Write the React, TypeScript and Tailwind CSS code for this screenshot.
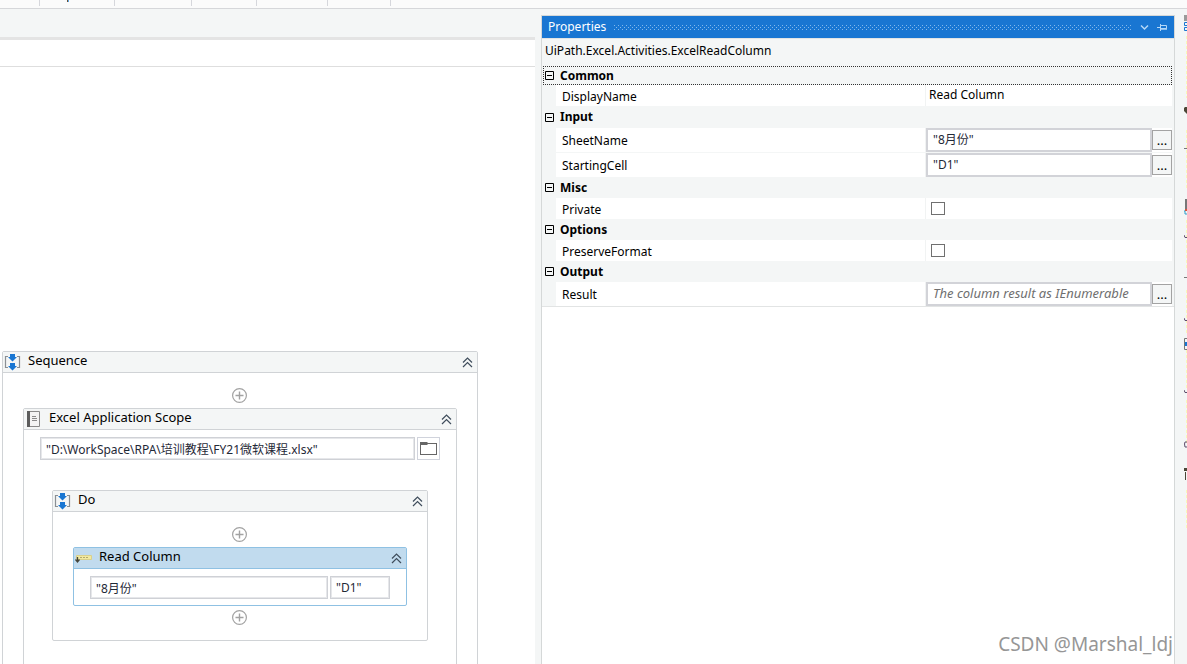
import type { ReactNode } from 'react';
import clsx from 'clsx';

function CollapseIcon() {
  return (
    <svg width="11" height="11" viewBox="0 0 11 11" fill="none" stroke="#3f4d5c" strokeWidth="1.2">
      <path d="M1 5.5 5.5 1 10 5.5M1 10 5.5 5.5 10 10" />
    </svg>
  );
}

function SequenceIcon() {
  return (
    <svg width="18" height="18" viewBox="1 0 18 18">
      <path d="M5 3.5H2.5v11H5M14 3.5h2.5v11H14" fill="none" stroke="#8a8f94" strokeWidth="1.2" />
      <path d="M7 1h5v3h2L9.5 8.5 5 4h2zM7 10h5v3h2l-4.5 4.5L5 13h2z" fill="#1976d2" />
    </svg>
  );
}

function ScopeIcon() {
  return (
    <svg width="18" height="18" viewBox="0 0 18 18">
      <path d="M3.5 1.5h11v15h-11z" fill="#f4f4f4" stroke="#8a8a8a" />
      <path d="M2 1h3v16H2z" fill="#5c5c5c" />
      <path d="M7 6.5h4M7 8.5h5M7 10.5h5" stroke="#8a8a8a" />
    </svg>
  );
}

function ColumnIcon() {
  return (
    <svg width="18" height="18" viewBox="0 0 18 18">
      <path d="M1.5 6.5h15v4h-15z" fill="#f2e9a0" stroke="#d9d08c" />
      <path d="M5 8.5h9" stroke="#b3aa70" strokeDasharray="2 1" />
      <path d="M2.5 8v5M.5 10.5l2 2.5 2-2.5" fill="none" stroke="#45453a" strokeWidth="1.3" />
    </svg>
  );
}

function AddButton({ className }: { className: string }) {
  return (
    <div className={clsx('flex justify-center pr-0.5', className)}>
      <button type="button" aria-label="Add activity">
        <svg className="block" width="15" height="15" viewBox="0 0 15 15" fill="none" stroke="#a2a2a2">
          <circle cx="7.5" cy="7.5" r="6.9" strokeWidth="1.2" />
          <path d="M7.5 3.5v8M3.5 7.5h8" strokeWidth="1.4" />
        </svg>
      </button>
    </div>
  );
}

type ActivityProps = {
  title: string;
  icon: ReactNode;
  selected?: boolean;
  children: ReactNode;
};

function Activity({ title, icon, selected, children }: ActivityProps) {
  return (
    <section className={clsx('rounded-xs border bg-white', selected ? 'border-[#8fc1e3]' : 'border-[#d0d3d6]')}>
      <header
        className={clsx(
          'flex h-[21px] items-center border-b pr-1 pl-px',
          selected ? 'border-[#8fc1e3] bg-[#c1dbee]' : 'border-[#d0d3d6] bg-[#f4f6f6]',
        )}
      >
        {icon}
        <h2 className="flex-1 pb-1 pl-1.5 text-[13px]">{title}</h2>
        <button type="button" aria-label={`Collapse ${title}`}>
          <CollapseIcon />
        </button>
      </header>
      {children}
    </section>
  );
}

function FieldBox({ label, value, className }: { label: string; value: string; className: string }) {
  return (
    <input
      aria-label={label}
      defaultValue={value}
      className={clsx(
        'h-[23px] min-w-0 border border-[#cfd1d6] bg-white px-[5px] text-[#1f2937] shadow-[inset_0_0_0_1px_#e6e7ea] outline-none',
        className,
      )}
    />
  );
}

function Designer() {
  return (
    <div className="flex w-[535px] shrink-0 flex-col">
      <div className="h-[31px] border-b-3 border-[#e4e4e4]" />
      <div className="h-[27px] border-b border-[#dedede] bg-white" />
      <div className="min-h-0 flex-1 overflow-hidden bg-white pt-[284px] pr-[57px] pl-0.5">
        <Activity title="Sequence" icon={<SequenceIcon />}>
          <AddButton className="pt-[15px] pb-[5px]" />
          <div className="px-5 pb-9">
            <Activity title="Excel Application Scope" icon={<ScopeIcon />}>
              <div className="flex gap-0.5 px-4 pt-[7px] pb-[30px]">
                <FieldBox label="Workbook path" value={'"D:\\WorkSpace\\RPA\\培训教程\\FY21微软课程.xlsx"'} className="flex-1" />
                <button
                  type="button"
                  aria-label="Browse"
                  className="flex size-[23px] items-center justify-center border border-[#d0d3dc] bg-white"
                >
                  <svg width="17" height="13" viewBox="0 0 17 13">
                    <path d="M0 0h7l1 1h9v12H0zM1 3v9h15V2H8L7 3z" fill="#666" fillRule="evenodd" />
                  </svg>
                </button>
              </div>
              <div className="px-7 pb-9">
                <Activity title="Do" icon={<SequenceIcon />}>
                  <AddButton className="pt-[15px] pb-[5px]" />
                  <div className="px-5">
                    <Activity title="Read Column" icon={<ColumnIcon />} selected>
                      <div className="flex gap-0.5 px-4 pt-[7px] pb-1.5">
                        <FieldBox label="Sheet name" value={'"8月份"'} className="flex-1" />
                        <FieldBox label="Starting cell" value={'"D1"'} className="w-[60px]" />
                      </div>
                    </Activity>
                  </div>
                  <AddButton className="pt-1 pb-[15px]" />
                </Activity>
              </div>
            </Activity>
          </div>
        </Activity>
      </div>
    </div>
  );
}

function Category({ title, focused }: { title: string; focused?: boolean }) {
  return (
    <button
      type="button"
      className={clsx(
        'flex w-full items-center gap-1.5 text-left font-bold',
        focused ? 'h-[19px] border border-dotted border-[#333] pl-px' : 'pl-0.5',
        !focused && (title === 'Input' ? 'h-[22px]' : 'h-[21px]'),
      )}
    >
      <svg width="9" height="9" viewBox="0 0 9 9" fill="none" stroke="#000">
        <path d="M.5.5h8v8h-8zM2 4.5h5" />
      </svg>
      {title}
    </button>
  );
}

function Property({ id, label, tall, children }: { id: string; label: string; tall?: boolean; children: ReactNode }) {
  return (
    <div className={clsx('grid grid-cols-[13px_minmax(0,1fr)_247px]', tall ? 'h-6' : 'h-[21px]')}>
      <span />
      <label htmlFor={id} className={clsx('flex items-center bg-white pl-1.5', tall ? 'pt-px' : 'pt-0.5')}>
        {label}
      </label>
      <div className="flex min-h-0 items-center border-l border-[#f1f3f3] bg-white">{children}</div>
    </div>
  );
}

function ExpressionField({ id, value, placeholder }: { id: string; value?: string; placeholder?: string }) {
  return (
    <>
      <input
        id={id}
        defaultValue={value}
        placeholder={placeholder}
        className="h-6 min-w-0 flex-1 border-2 border-[#d2d3d8] bg-white pr-1 pb-0.5 pl-[5px] text-[#1f2937] outline-none placeholder:text-[13px] placeholder:text-[#6f6f6f] placeholder:italic"
      />
      <button
        type="button"
        aria-label={`Edit ${id}`}
        className="flex h-5 w-5 items-center justify-center border border-[#a3a3a3] bg-[#f4f6f6] text-[13px]"
      >
        ...
      </button>
    </>
  );
}

function PropertiesPanel() {
  const checkbox = 'ml-[5px] h-[13px] w-3.5 appearance-none border border-[#707070] bg-white';

  return (
    <aside className="mt-1.5 flex min-w-0 flex-1 flex-col border-x border-t border-[#d5d8d8] bg-white">
      <header className="flex h-[22px] items-center bg-[#1976d2] pr-[7px] pl-1.5 text-white">
        <h2>Properties</h2>
        <svg className="ml-2 h-[5px] min-w-0 flex-1" aria-hidden="true">
          <pattern id="grip" width="4" height="4" patternUnits="userSpaceOnUse">
            <path d="M0 0h1v1H0zM2 2h1v1H2z" fill="#82b8ec" />
          </pattern>
          <rect width="100%" height="100%" fill="url(#grip)" />
        </svg>
        <button type="button" aria-label="Panel menu" className="ml-2">
          <svg width="9" height="7" viewBox="0 0 9 7" fill="none" stroke="#b5d8f8" strokeWidth="1.5">
            <path d="m1 1.5 3.5 3.5L8 1.5" />
          </svg>
        </button>
        <button type="button" aria-label="Auto hide" className="ml-2">
          <svg width="10" height="9" viewBox="0 0 10 9" fill="none" stroke="#b5d8f8">
            <path d="M0 4.5h3M3.5 1v7M3.5 2.5h6v3h-6" />
            <path d="M4 6h6" strokeWidth="1.5" />
          </svg>
        </button>
      </header>
      <div className="border-y border-[#e2e4e4] bg-[#f4f6f6] pr-0.5 pl-px">
        <p className="h-[27px] pt-0.5 pl-0.5 leading-5">UiPath.Excel.Activities.ExcelReadColumn</p>
        <Category title="Common" focused />
        <Property id="DisplayName" label="DisplayName">
          <input id="DisplayName" defaultValue="Read Column" className="w-full bg-transparent pb-0.5 pl-[3px] outline-none" />
        </Property>
        <Category title="Input" />
        <div className="flex flex-col gap-px">
          <Property id="SheetName" label="SheetName" tall>
            <ExpressionField id="SheetName" value={'"8月份"'} />
          </Property>
          <Property id="StartingCell" label="StartingCell" tall>
            <ExpressionField id="StartingCell" value={'"D1"'} />
          </Property>
        </div>
        <Category title="Misc" />
        <Property id="Private" label="Private">
          <input id="Private" type="checkbox" className={checkbox} />
        </Property>
        <Category title="Options" />
        <Property id="PreserveFormat" label="PreserveFormat">
          <input id="PreserveFormat" type="checkbox" className={checkbox} />
        </Property>
        <Category title="Output" />
        <Property id="Result" label="Result" tall>
          <ExpressionField id="Result" placeholder="The column result as IEnumerable" />
        </Property>
      </div>
    </aside>
  );
}

// only the left edge of the outline panel's icons shows here
function OutlineRail() {
  return (
    <div className="flex w-3 shrink-0 justify-end">
      <svg width="3" height="655" viewBox="0 9 3 655" fill="none" stroke="#4b4636">
        <path d="M2.5 36v62M2.5 130v60M2.5 220v50M2.5 290v45M2.5 350v38M2.5 400v45M2.5 490v40" stroke="#fbf8b8" strokeDasharray="3 2" />
        <path d="M0 15h3v6H0z" fill="#9a9a9a" stroke="none" />
        <path d="M3 22.5H.5v3H3M3 27.5H.5v3H3" stroke="#1976d2" />
        <path d="M3 107H1L0 108v3l3 3z" fill="#4b4636" stroke="none" />
        <path d="M0 148.5h3M0 277.5h3" stroke="#777" />
        <path d="M2 199v12" stroke="#777" strokeWidth="2" />
        <path d="M0 211h1v3h2" stroke="#2f9ccc" />
        <path d="M1 209h2v2H1z" fill="#d4543c" stroke="none" />
        <path d="M0 235l1 2.5h2M0 318l1 2.5h2M0 390l1 2.5h2M3 442H1l-.5 2 .5 3h2" stroke="#5d4d6b" />
        <path d="M3 338.5H.5v11H3" stroke="#777" />
        <path d="M1 342h2v4H1z" fill="#1976d2" stroke="none" />
        <path d="M0 468h3v3H0zM1 472h1v8H1z" fill="#4b4636" stroke="none" />
      </svg>
    </div>
  );
}

function App() {
  return (
    <div className="relative flex h-screen flex-col overflow-hidden bg-[#f4f6f6] font-['Noto_Sans','Noto_Sans_CJK_SC',sans-serif] text-xs leading-4 text-black">
      <div className="flex h-[9px] shrink-0 border-b border-[#d6d7da] bg-[#fbfbfb]">
        <div className="h-1.5 w-10 border-r border-[#d6d7dc]" />
        <div className="h-1.5 w-[75px] border-r border-[#d6d7dc] pl-[27px]">
          <div className="h-0.5 w-0.5 border-l border-[#6b4f32] bg-[#58a6e8]" />
        </div>
        <div className="h-1.5 w-[77px] border-r border-[#d6d7dc]" />
        <div className="h-1.5 w-[65px] border-r border-[#d6d7dc]" />
        <div className="h-1.5 w-[71px] border-r border-[#d6d7dc]" />
        <div className="h-1.5 w-[63px] border-r border-[#d6d7dc]" />
      </div>
      <main className="flex min-h-0 flex-1">
        <Designer />
        <div className="w-1.5 shrink-0" />
        <PropertiesPanel />
        <OutlineRail />
      </main>
      <span className="absolute right-3.5 bottom-2 text-[19px] leading-6 text-[#969696] [text-shadow:1px_1px_1px_#fff]">
        CSDN @Marshal_ldj
      </span>
    </div>
  );
}

export default App;
